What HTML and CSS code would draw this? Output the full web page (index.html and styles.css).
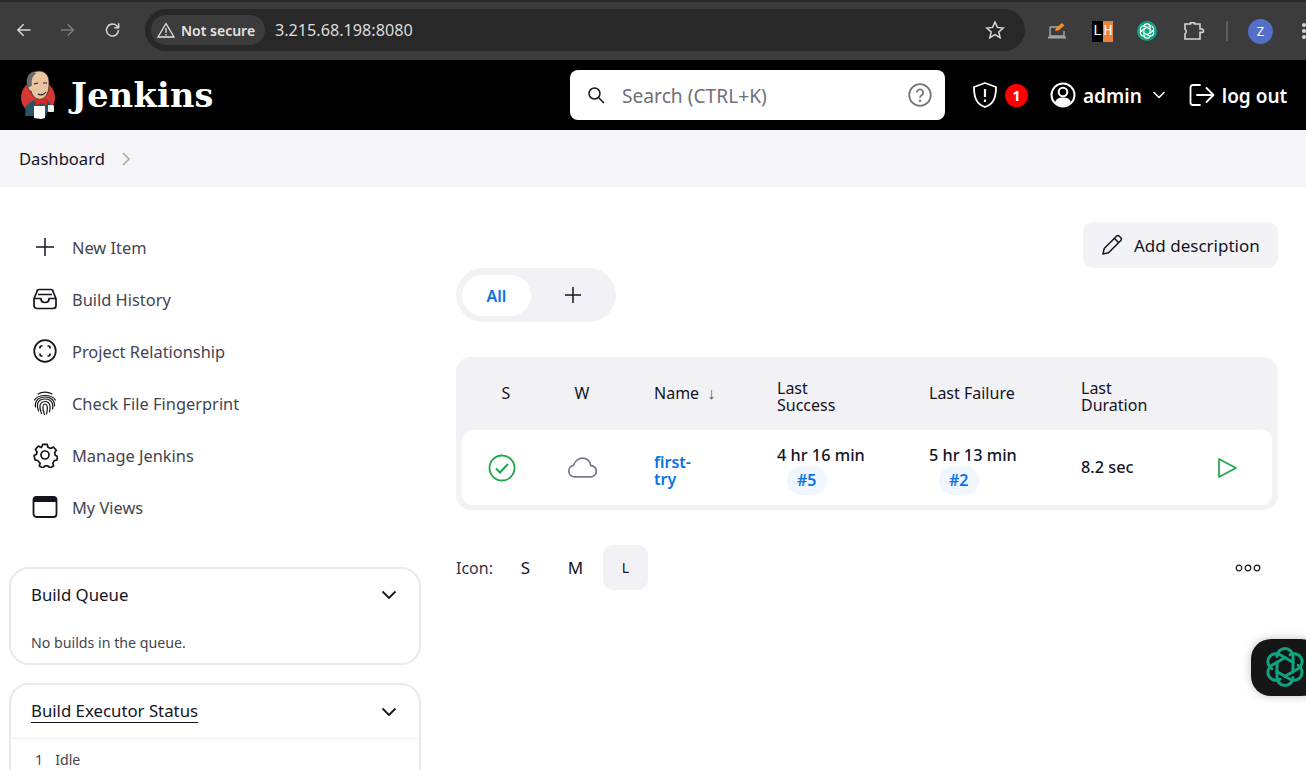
FILE: index.html
```html
<!DOCTYPE html>
<html lang="en">
<head>
    <meta charset="UTF-8">
    <title>Dashboard [Jenkins]</title>
    <link rel="stylesheet" href="styles.css">
</head>
<body>
    <div class="browser-bar">
        <svg class="nav-icon" width="20" height="20" viewBox="0 0 20 20"><path d="M17 10H4M10 4l-6 6 6 6" fill="none" stroke="#d5d5d5" stroke-width="1.6"/></svg>
        <svg class="nav-icon" width="20" height="20" viewBox="0 0 20 20"><path d="M3 10h13M10 4l6 6-6 6" fill="none" stroke="#7d7d7d" stroke-width="1.6"/></svg>
        <svg class="nav-icon" width="20" height="20" viewBox="0 0 20 20"><path d="M16 10a6.2 6.2 0 1 1-1.9-4.4L16 7.4M16.2 3v4.6h-4.6" fill="none" stroke="#d5d5d5" stroke-width="1.6"/></svg>
        <div class="address">
            <div class="not-secure">
                <svg width="18" height="16" viewBox="0 0 18 16"><path d="M9 1.5L1 15h16zM9 6v5M9 12v1.5" fill="none" stroke="#e3e3e3" stroke-width="1.3"/></svg>
                <span>Not secure</span>
            </div>
            <span class="url">3.215.68.198:8080</span>
            <svg class="star" width="20" height="20" viewBox="0 0 20 20"><path d="M10 2l2.4 5.4 5.8.6-4.4 3.9 1.3 5.8L10 14.7l-5.1 3 1.3-5.8L1.8 8l5.8-.6z" fill="none" stroke="#d8d8d8" stroke-width="1.5"/></svg>
        </div>
        <div class="extensions">
            <svg width="20" height="18" viewBox="0 0 20 18"><path d="M3 5h9M3 5v9h14V9" fill="none" stroke="#a8a8a8" stroke-width="1.4"/><path d="M1 15.5h18" stroke="#a8a8a8" stroke-width="2"/><path d="M8 9l1-3 6-5 2.5 2.5-6 5z" fill="#f28c28"/></svg>
            <div class="lh-badge"><span class="lh-l">L</span><span class="lh-h">H</span></div>
            <svg width="20" height="20" viewBox="-26 -26 52 52"><circle r="26" fill="#10a37f"/><g fill="none" stroke="#fff" stroke-width="3" stroke-linecap="round"><use href="#knot-leaf"/><use href="#knot-leaf" transform="rotate(60)"/><use href="#knot-leaf" transform="rotate(120)"/><use href="#knot-leaf" transform="rotate(180)"/><use href="#knot-leaf" transform="rotate(240)"/><use href="#knot-leaf" transform="rotate(300)"/></g></svg>
            <svg width="22" height="20" viewBox="0 0 22 20"><path d="M2 3h5.5V1.8h4V3H17v5h1.8a1.6 1.6 0 0 1 0 3.4H17V18H2v-5.2a2.8 2.8 0 0 0 0-4.6z" fill="none" stroke="#d5d5d5" stroke-width="1.6"/></svg>
            <span class="ext-divider"></span>
            <span class="avatar">Z</span>
            <span class="menu-dots"></span>
        </div>
    </div>

    <header class="jenkins-header">
        <div class="brand">
            <svg class="logo" width="38" height="50" viewBox="0 0 38 50">
                <circle cx="19" cy="27.5" r="17" fill="#d33833"/>
                <path d="M6 46l1-10 7-6 6 3 7-5 6 8v6h-5l-1 4H8z" fill="#2f5366"/>
                <path d="M9 12C9 5 14 1 20 1s10 4 10 11c0 5 0 8-2 12-2 4-5 6-9 5-4-1-6-4-7-8-2 0-4-3-3-9z" fill="#e8c4a0" stroke="#3a2a20" stroke-width=".8"/>
                <path d="M9 18C6 11 8 3 15 1.5l2 2c-3 2-5 6-4 12z" fill="#6b696e"/>
                <path d="M15 14l4-1M24 13l4 0M19 24c3 1.5 6 .5 8-2" fill="none" stroke="#231f20" stroke-width="1.2"/>
                <path d="M16 29l6 2 6-3v7l-6-2-5 3z" fill="#e0271f"/>
                <path d="M15 36h11v12l-4 1-7-1z" fill="#fff"/>
                <rect x="29" y="35" width="6" height="7" rx="1" fill="#f0f0f0"/>
            </svg>
            <span class="brand-name">Jenkins</span>
        </div>
        <div class="search">
            <svg width="20" height="20" viewBox="0 0 20 20"><circle cx="8.5" cy="8.5" r="5.5" fill="none" stroke="#14141f" stroke-width="1.5"/><path d="M12.5 12.5L18 18" stroke="#14141f" stroke-width="1.5"/></svg>
            <span class="search-text">Search (CTRL+K)</span>
            <svg width="24" height="24" viewBox="0 0 24 24"><circle cx="12" cy="12" r="10.8" fill="none" stroke="#75757f" stroke-width="1.8"/><path d="M8.8 9.5a3.2 3.2 0 1 1 4.8 2.8c-1 .6-1.6 1.2-1.6 2.4" fill="none" stroke="#75757f" stroke-width="1.8"/><circle cx="12" cy="17.8" r="1.2" fill="#75757f"/></svg>
        </div>
        <div class="header-actions">
            <div class="security">
                <svg width="28" height="28" viewBox="0 0 28 28"><path d="M14 2l11 4c0 10-2 17-11 20C5 23 3 16 3 6z" fill="none" stroke="#fff" stroke-width="1.8" stroke-linejoin="round"/><path d="M14 8v8M14 18.5v2.5" stroke="#fff" stroke-width="2.2"/></svg>
                <span class="badge">1</span>
            </div>
            <div class="user">
                <svg width="26" height="26" viewBox="0 0 26 26"><circle cx="13" cy="13" r="11.5" fill="none" stroke="#fff" stroke-width="2"/><circle cx="13" cy="10" r="4.3" fill="none" stroke="#fff" stroke-width="2"/><path d="M5 20c2-4 5-4.5 8-4.5s6 .5 8 4.5c-2 2.5-5 4-8 4s-6-1.5-8-4z" fill="#fff"/></svg>
                <span class="header-label">admin</span>
                <svg class="user-caret" width="14" height="8" viewBox="0 0 14 8"><path d="M1.5 1L7 6.5 12.5 1" fill="none" stroke="#fff" stroke-width="1.5"/></svg>
            </div>
            <div class="logout">
                <svg width="26" height="24" viewBox="0 0 26 24"><path d="M11 2H4a2.5 2.5 0 0 0-2.5 2.5v15A2.5 2.5 0 0 0 4 22h7" fill="none" stroke="#fff" stroke-width="1.8" stroke-linecap="round"/><path d="M8 12h16M17.5 5l7 7-7 7" fill="none" stroke="#fff" stroke-width="1.8" stroke-linejoin="round" stroke-linecap="round"/></svg>
                <span class="header-label">log out</span>
            </div>
        </div>
    </header>

    <div class="breadcrumbs">
        <span>Dashboard</span>
        <svg width="10" height="14" viewBox="0 0 10 14"><path d="M2 1l6 6-6 6" fill="none" stroke="#a5a5b2" stroke-width="1.5"/></svg>
    </div>

    <div class="page">
        <aside class="sidebar">
            <nav class="side-nav">
                <a class="side-item">
                    <svg width="26" height="26" viewBox="0 0 26 26"><path d="M13 4v18M4 13h18" stroke="#14141f" stroke-width="1.5"/></svg>
                    New Item
                </a>
                <a class="side-item">
                    <svg width="26" height="26" viewBox="0 0 26 26"><path d="M7 3.5h12a2 2 0 0 1 2 2l3 7v7a3 3 0 0 1-3 3H5a3 3 0 0 1-3-3v-7l3-7a2 2 0 0 1 2-2zM2 12.5h7c0 2 1 4 4 4s4-2 4-4h7M6 8.5h14" fill="none" stroke="#14141f" stroke-width="1.7" stroke-linejoin="round"/></svg>
                    Build History
                </a>
                <a class="side-item">
                    <svg width="26" height="26" viewBox="0 0 26 26"><circle cx="13" cy="13" r="10.8" fill="none" stroke="#14141f" stroke-width="1.7"/><path d="M8 10.5V9.3C8 8.6 8.6 8 9.3 8h1.2M15.500 8h1.200c.7 0 1.300.6 1.300 1.300v1.200M18 15.500v1.200c0 .7-.6 1.300-1.300 1.300h-1.200M10.500 18H9.300C8.600 18 8 17.400 8 16.700v-1.200" fill="none" stroke="#14141f" stroke-width="1.7"/></svg>
                    Project Relationship
                </a>
                <a class="side-item">
                    <svg width="26" height="26" viewBox="0 0 26 26"><g fill="none" stroke="#14141f" stroke-width="1.2" stroke-linecap="round"><path d="M6 4c4-2.5 10-2.5 14 0"/><path d="M2.5 10c4-6 17-6 21 0"/><path d="M3.5 17c-1-7 4-10 9.5-10s10 3 9.5 9"/><path d="M6.5 21c-1-3-1.500-5-1-7 1-4 4.500-5 7.500-5s6.500 1.500 7.500 5c.5 2 .5 3.500 0 5"/><path d="M9.5 23.500c-1-3-2-5-1.500-8 .5-2.500 3-4 5-4s4.500 1.500 5 4.500c.3 2 0 4-.5 6"/><path d="M12.5 24.500c-1-3-2-5-1.500-8 .3-1.500 1-2.500 2-2.500s2 1 2.300 3c.3 2-.3 5-.8 7"/></g></svg>
                    Check File Fingerprint
                </a>
                <a class="side-item">
                    <svg width="26" height="26" viewBox="0 0 26 26"><circle cx="13" cy="13" r="4" fill="none" stroke="#14141f" stroke-width="1.7"/><path d="M10.8 2.300h4.400l.7 3 2.700 1.200 2.700-1.500 3 3.300-1.700 2.500.6 2.400 2.400 1.300-.1 0-.6 3.500-2.600.6-1.500 2.600.8 2.700-3.700 2-2-2h-2.900l-2 2-3.700-2 .8-2.700L5.700 18.500l-2.700-.6-.9-4.300 2.400-1.300.6-2.400L3.400 7.400l3-3.400 2.700 1.500 1-1.200z" fill="none" stroke="#14141f" stroke-width="1.7" stroke-linejoin="round"/></svg>
                    Manage Jenkins
                </a>
                <a class="side-item">
                    <svg width="26" height="26" viewBox="0 0 26 26"><rect x="1.5" y="3" width="23" height="20" rx="3" fill="none" stroke="#14141f" stroke-width="1.8"/><path d="M1.5 6a3 3 0 0 1 3-3h17a3 3 0 0 1 3 3v2h-23z" fill="#14141f"/></svg>
                    My Views
                </a>
            </nav>

            <section class="side-card">
                <div class="card-head">
                    <span class="card-title">Build Queue</span>
                    <svg width="16" height="10" viewBox="0 0 16 10"><path d="M1.5 1.5L8 8l6.5-6.5" fill="none" stroke="#14141f" stroke-width="1.8"/></svg>
                </div>
                <p class="card-text">No builds in the queue.</p>
            </section>

            <section class="side-card">
                <div class="card-head card-head-ruled">
                    <span class="card-title card-link">Build Executor Status</span>
                    <svg width="16" height="10" viewBox="0 0 16 10"><path d="M1.5 1.5L8 8l6.5-6.5" fill="none" stroke="#14141f" stroke-width="1.8"/></svg>
                </div>
                <div class="executor"><span>1</span><span>Idle</span></div>
            </section>
        </aside>

        <main class="content">
            <div class="desc-row">
                <button class="desc-btn">
                    <svg width="22" height="22" viewBox="0 0 22 22"><path d="M2 20l1.2-5.500L15.500 2.200a2 2 0 0 1 2.800 0l1.500 1.500a2 2 0 0 1 0 2.800L7.500 18.800zM13.500 4.500l4 4" fill="none" stroke="#14141f" stroke-width="1.5" stroke-linejoin="round"/></svg>
                    Add description
                </button>
            </div>

            <div class="tabs">
                <span class="tab-active">All</span>
                <svg class="tab-add" width="18" height="18" viewBox="0 0 18 18"><path d="M9 1v16M1 9h16" stroke="#14141f" stroke-width="1.5"/></svg>
            </div>

            <div class="jobs">
                <div class="job-grid job-head">
                    <span class="cell-center">S</span>
                    <span class="cell-center">W</span>
                    <span class="cell-name">Name <span class="sort-arrow">↓</span></span>
                    <span class="cell-two-line">Last<br>Success</span>
                    <span>Last Failure</span>
                    <span class="cell-two-line">Last<br>Duration</span>
                    <span></span>
                </div>
                <div class="job-grid job-row">
                    <span class="cell-center">
                        <svg class="status-icon status-ok" width="28" height="28" viewBox="0 0 28 28"><circle cx="14" cy="14" r="12.5" fill="none" stroke="#1ea64b" stroke-width="1.8"/><path d="M8 14.5l4 4 8-8.5" fill="none" stroke="#1ea64b" stroke-width="2"/></svg>
                    </span>
                    <span class="cell-center">
                        <svg class="status-icon" width="30" height="23" viewBox="0 0 32 24"><path d="M8 22a6.2 6.2 0 0 1-1-12.300C8.500 5 12.500 2 16.500 2c5 0 8.500 3.500 9 8a6 6 0 0 1-.5 12z" fill="none" stroke="#7a7a8c" stroke-width="1.9"/></svg>
                    </span>
                    <a class="cell-name cell-two-line job-link">first-<br>try</a>
                    <span class="cell-run">4 hr 16 min<a class="build-tag">#5</a></span>
                    <span class="cell-run">5 hr 13 min<a class="build-tag">#2</a></span>
                    <span>8.2 sec</span>
                    <span class="cell-play">
                        <svg width="22" height="22" viewBox="0 0 22 22"><path d="M3 2l17 9-17 9z" fill="none" stroke="#1ea64b" stroke-width="1.7" stroke-linejoin="round"/></svg>
                    </span>
                </div>
            </div>

            <div class="icon-row">
                <span class="icon-label">Icon:</span>
                <span class="size-btn">S</span>
                <span class="size-btn">M</span>
                <span class="size-btn size-active">L</span>
                <svg class="more" width="26" height="8" viewBox="0 0 26 8"><g fill="none" stroke="#14141f" stroke-width="1.2"><circle cx="4" cy="4" r="2.8"/><circle cx="13" cy="4" r="2.8"/><circle cx="22" cy="4" r="2.8"/></g></svg>
            </div>
        </main>
    </div>

    <!-- extension widget floats over the page -->
    <div class="gpt-widget">
        <svg width="44" height="44" viewBox="-22 -22 44 44">
            <defs><path id="knot-leaf" d="M-8 -10.5A8 8 0 0 1 8 -10.5V5"/></defs>
            <g fill="none" stroke="#10a37f" stroke-width="3" stroke-linecap="round">
                <use href="#knot-leaf"/>
                <use href="#knot-leaf" transform="rotate(60)"/>
                <use href="#knot-leaf" transform="rotate(120)"/>
                <use href="#knot-leaf" transform="rotate(180)"/>
                <use href="#knot-leaf" transform="rotate(240)"/>
                <use href="#knot-leaf" transform="rotate(300)"/>
            </g>
        </svg>
    </div>
</body>
</html>
```

FILE: styles.css
```css
html, body {
    height: 770px;
    overflow: hidden;
}
body {
    margin: 0;
    font-family: "Noto Sans", "Open Sans", Arial, sans-serif;
    color: #14141f;
    background-color: white;
}
a {
    text-decoration: none;
}

/* browser chrome */
.browser-bar {
    height: 60px;
    box-sizing: border-box;
    border-top: 2px solid #2a2a2a;
    padding: 7px 0 0 14px;
    display: flex;
    align-items: flex-start;
    background-color: #3c3c3c;
}
.nav-icon {
    margin: 11px 25px 0 0;
}
.nav-icon:nth-child(3) {
    margin-right: 23px;
}
.address {
    width: 880px;
    height: 42px;
    flex: none;
    box-sizing: border-box;
    padding: 6px 20px 6px 6px;
    display: flex;
    align-items: center;
    border-radius: 21px;
    background-color: #282828;
}
.not-secure {
    width: 114px;
    height: 30px;
    box-sizing: border-box;
    padding-left: 6px;
    display: flex;
    align-items: center;
    gap: 6px;
    border-radius: 15px;
    background-color: #3c3c3c;
    color: #e3e3e3;
    font-size: 14px;
    font-weight: 600;
    white-space: nowrap;
}
.url {
    margin-left: 10px;
    color: #dcdcdc;
    font-size: 16.2px;
}
.star {
    margin-left: auto;
}
.extensions {
    margin: 11px 0 0 22px;
    display: flex;
    align-items: center;
    flex: 1;
    height: 22px;
}
.lh-badge {
    margin-left: 25px;
    display: flex;
    font-family: "Liberation Mono", monospace;
    font-size: 15px;
    line-height: 21px;
}
.lh-l {
    width: 11px;
    text-align: center;
    background-color: #000;
    color: white;
}
.lh-h {
    width: 10px;
    text-align: center;
    background-color: #e9823c;
    color: white;
}
.extensions > svg:nth-child(3) {
    margin-left: 24px;
}
.extensions > svg:nth-child(4) {
    margin-left: 26px;
}
.ext-divider {
    margin-left: 21px;
    width: 2px;
    height: 20px;
    background-color: #5c5c5c;
}
.avatar {
    margin-left: 20px;
    width: 25px;
    height: 25px;
    border-radius: 50%;
    background-color: #5470c6;
    color: white;
    font-size: 13px;
    line-height: 25px;
    text-align: center;
}
.menu-dots {
    margin-left: 29px;
    width: 4px;
    height: 4px;
    border-radius: 50%;
    background-color: #d5d5d5;
    box-shadow: 0 -6px 0 #d5d5d5, 0 6px 0 #d5d5d5;
}

/* jenkins header */
.jenkins-header {
    height: 70px;
    display: flex;
    align-items: center;
    background-color: #000;
    color: white;
}
.brand {
    width: 570px;
    box-sizing: border-box;
    padding-left: 19px;
    display: flex;
    align-items: center;
    gap: 14px;
}
.brand-name {
    font-family: "DejaVu Serif", "Liberation Serif", serif;
    font-weight: 700;
    font-size: 33.5px;
    letter-spacing: .3px;
}
.search {
    width: 375px;
    height: 50px;
    box-sizing: border-box;
    padding: 0 13px 0 16px;
    display: flex;
    align-items: center;
    border-radius: 8px;
    background-color: white;
    color: #6f6f78;
}
.search-text {
    margin-left: 16px;
    padding-top: 1px;
    flex: 1;
    font-size: 19.2px;
}
.header-actions {
    flex: 1;
    padding-left: 26px;
    display: flex;
    align-items: center;
}
.security {
    display: flex;
    align-items: center;
    gap: 6px;
}
.badge {
    width: 23px;
    height: 23px;
    border-radius: 50%;
    background-color: #f00;
    font-size: 14px;
    font-weight: 700;
    line-height: 23px;
    text-align: center;
}
.user {
    margin-left: 22px;
    display: flex;
    align-items: center;
    gap: 7px;
}
.user-caret {
    margin-left: 3px;
}
.logout {
    margin-left: 23px;
    display: flex;
    align-items: center;
    gap: 7px;
}
.header-label {
    padding-top: 1px;
    font-size: 19px;
    font-weight: 600;
    white-space: nowrap;
}

/* breadcrumb bar */
.breadcrumbs {
    height: 57px;
    box-sizing: border-box;
    padding-left: 19px;
    display: flex;
    align-items: center;
    gap: 16px;
    background-color: #f5f5f8;
    font-size: 16.6px;
}

/* page */
.page {
    height: 583px;
    overflow: hidden;
    display: flex;
}
.sidebar {
    width: 412px;
    margin-left: 9px;
    padding-top: 34px;
    flex: none;
}
.side-nav {
    margin-bottom: 34px;
}
.side-item {
    height: 52px;
    padding-left: 23px;
    display: flex;
    align-items: center;
    gap: 14px;
    color: #44444f;
    font-size: 16.4px;
}
.side-item svg {
    flex: none;
}
.side-card {
    margin-bottom: 18px;
    box-sizing: border-box;
    border: 2px solid #e9e9f0;
    border-radius: 20px;
}
.card-head {
    height: 53px;
    box-sizing: border-box;
    padding: 0 22px 2px 20px;
    display: flex;
    align-items: center;
    justify-content: space-between;
}
.card-head-ruled {
    height: 54px;
    padding-bottom: 0;
    border-bottom: 1px solid #f1f1f5;
}
.card-title {
    font-size: 16.8px;
    font-weight: 450;
}
.card-link {
    border-bottom: 1px solid #14141f;
    line-height: 22px;
}
.card-text {
    margin: 11px 0 11px 20px;
    color: #44444f;
    font-size: 14.2px;
}
.executor {
    padding: 11px 0 30px 24px;
    display: flex;
    gap: 12px;
    color: #44444f;
    font-size: 14.2px;
}

/* main column */
.content {
    width: 822px;
    margin-left: 35px;
    padding-top: 35px;
}
.desc-row {
    display: flex;
    justify-content: flex-end;
}
.desc-btn {
    width: 195px;
    height: 46px;
    padding: 0 0 0 18px;
    display: flex;
    align-items: center;
    gap: 11px;
    border: none;
    border-radius: 10px;
    background-color: #f3f3f7;
    color: #14141f;
    font-family: inherit;
    font-size: 17px;
    font-weight: 450;
    cursor: pointer;
}
.tabs {
    width: 160px;
    height: 54px;
    box-sizing: border-box;
    padding: 7px 6px;
    display: flex;
    align-items: flex-start;
    border-radius: 27px;
    background-color: #f2f2f6;
}
.tab-active {
    width: 69px;
    height: 41px;
    border-radius: 21px;
    background-color: white;
    color: #0a72e6;
    font-size: 16px;
    font-weight: 600;
    line-height: 42px;
    text-align: center;
}
.tab-add {
    margin: 11px 0 0 33px;
}
.jobs {
    margin-top: 35px;
    box-sizing: border-box;
    padding: 0 6px 5px;
    border-radius: 15px;
    background-color: #f2f2f6;
}
.job-grid {
    display: grid;
    grid-template-columns: 88px 64px 163px 152px 152px 120px 1fr;
    align-items: center;
    line-height: 17px;
}
.job-head {
    height: 73px;
    font-size: 16px;
    font-weight: 450;
}
.job-row {
    height: 75px;
    border-radius: 10px;
    background-color: white;
    font-size: 16.3px;
    font-weight: 500;
}
.cell-center {
    text-align: center;
}
.cell-name {
    padding-left: 40px;
}
.cell-two-line {
    padding-top: 6px;
}
.sort-arrow {
    margin-left: 4px;
    color: #55555f;
    font-weight: 400;
}
.job-link {
    color: #0a72e6;
    font-size: 16px;
    font-weight: 600;
}
.status-icon {
    display: block;
    margin: 0 auto;
}
.status-ok {
    margin-left: 26px;
}
.cell-run {
    display: flex;
    flex-direction: column;
    align-items: flex-start;
    padding-top: 5px;
    line-height: 20px;
}
.build-tag {
    margin: 1px 0 0 10px;
    padding: 0 10px;
    height: 29px;
    border-radius: 15px;
    background-color: #f0f6fe;
    color: #0a72e6;
    font-size: 16px;
    font-weight: 600;
    line-height: 29px;
}
.cell-play {
    padding-left: 15px;
}
.cell-play svg {
    display: block;
}
.icon-row {
    margin-top: 35px;
    height: 45px;
    display: flex;
    align-items: center;
    font-size: 16px;
}
.icon-label {
    color: #33333d;
    margin-right: 10px;
}
.size-btn {
    width: 45px;
    height: 45px;
    margin-right: 5px;
    border-radius: 10px;
    font-size: 17px;
    font-weight: 450;
    line-height: 45px;
    text-align: center;
}
.size-active {
    background-color: #f2f2f6;
    font-size: 14px;
    margin-right: 0;
}
.more {
    margin-left: auto;
    margin-right: 17px;
}

/* floating extension button */
.gpt-widget {
    position: absolute;
    left: 1251px;
    top: 639px;
    width: 70px;
    height: 57px;
    box-sizing: border-box;
    padding: 6px 0 0 12px;
    border-radius: 20px;
    background-color: #161616;
    box-shadow: 0 0 8px rgba(0, 0, 0, 0.25);
}
```
